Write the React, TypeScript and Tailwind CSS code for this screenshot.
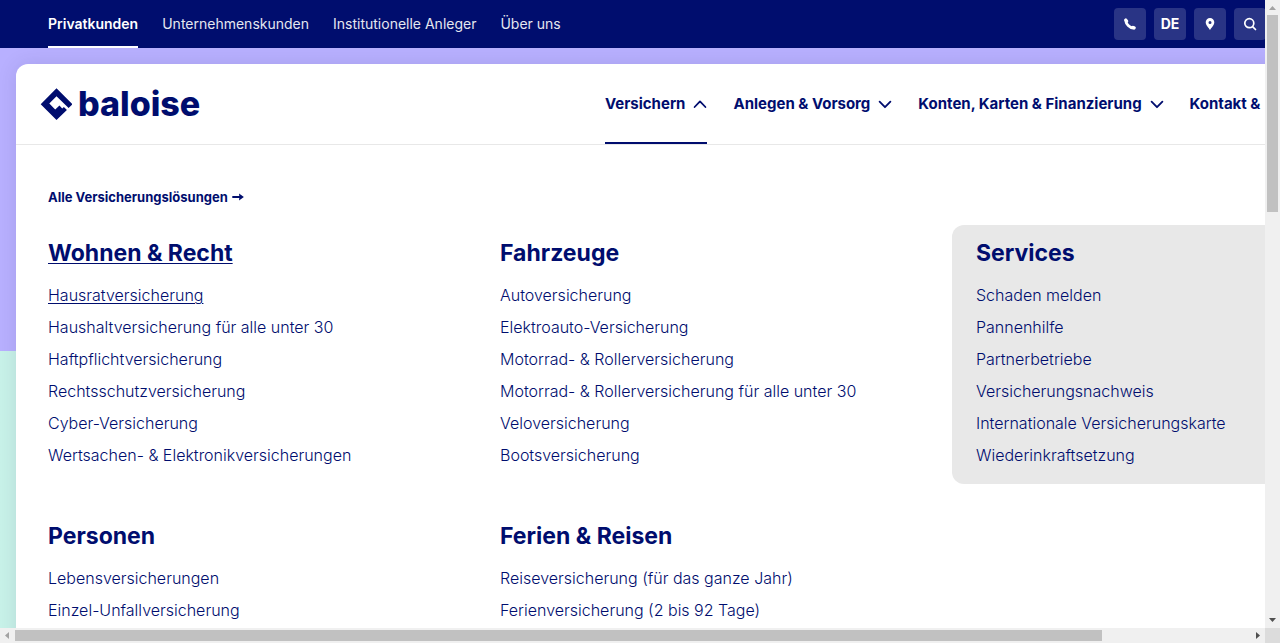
import React from "react";

type Group = { title: string; items: string[]; active?: boolean };

const portals = ["Privatkunden", "Unternehmenskunden", "Institutionelle Anleger", "Über uns"];

const mainNav = [
  { label: "Versichern", open: true },
  { label: "Anlegen & Vorsorg", open: false },
  { label: "Konten, Karten & Finanzierung", open: false },
];

const firstColumn: Group[] = [
  {
    title: "Wohnen & Recht",
    active: true,
    items: [
      "Hausratversicherung",
      "Haushaltversicherung für alle unter 30",
      "Haftpflichtversicherung",
      "Rechtsschutzversicherung",
      "Cyber-Versicherung",
      "Wertsachen- & Elektronikversicherungen",
    ],
  },
  { title: "Personen", items: ["Lebensversicherungen", "Einzel-Unfallversicherung"] },
];

const secondColumn: Group[] = [
  {
    title: "Fahrzeuge",
    items: [
      "Autoversicherung",
      "Elektroauto-Versicherung",
      "Motorrad- & Rollerversicherung",
      "Motorrad- & Rollerversicherung für alle unter 30",
      "Veloversicherung",
      "Bootsversicherung",
    ],
  },
  {
    title: "Ferien & Reisen",
    items: ["Reiseversicherung (für das ganze Jahr)", "Ferienversicherung (2 bis 92 Tage)"],
  },
];

const services: Group = {
  title: "Services",
  items: [
    "Schaden melden",
    "Pannenhilfe",
    "Partnerbetriebe",
    "Versicherungsnachweis",
    "Internationale Versicherungskarte",
    "Wiederinkraftsetzung",
  ],
};

function LinkGroup({ group }: { group: Group }) {
  return (
    <section>
      <h2 className="text-[23px] leading-8 font-bold">
        <a href="#" className={group.active ? "underline decoration-1 underline-offset-2" : ""}>
          {group.title}
        </a>
      </h2>
      <ul className="mt-2.5">
        {group.items.map((item, i) => (
          <li key={item} className="h-8 text-base leading-8 font-light whitespace-nowrap">
            <a href="#" className={group.active && i === 0 ? "underline decoration-1 underline-offset-2" : ""}>
              {item}
            </a>
          </li>
        ))}
      </ul>
    </section>
  );
}

function Chevron({ up }: { up: boolean }) {
  return (
    <svg viewBox="0 0 14 14" className="size-3.5" fill="none" stroke="currentColor" strokeWidth="1.8" strokeLinecap="round" strokeLinejoin="round" aria-hidden="true">
      <path d={up ? "M1.6 10 7 4.4 12.4 10" : "M1.6 4.6 7 10.2 12.4 4.6"} />
    </svg>
  );
}

function Logo() {
  return (
    <a href="#" aria-label="baloise" className="flex items-center gap-1.5">
      <svg viewBox="0 0 32 32" className="size-8" fill="currentColor" aria-hidden="true">
        <path d="M16.500.3 32.500 16.200l-3.900 3.900L16.500 8.200 9.300 15.600l5.900 6 4.300-4.100 2.700 2.900 1.700-1.300 3 3L16.500 32 .7 16.200Z" />
      </svg>
      <span className="text-[34px] leading-10 font-extrabold">baloise</span>
    </a>
  );
}

function ToolButton({ label, children }: { label: string; children: React.ReactNode }) {
  return (
    <button type="button" aria-label={label} className="flex size-8 items-center justify-center rounded bg-[#293485] text-sm font-bold text-white">
      {children}
    </button>
  );
}

function Header() {
  return (
    <header className="flex h-12 items-center justify-between bg-[#000d6e] pr-[174px] pl-12 text-sm text-[#e5e7f0]">
      <nav className="flex h-full gap-6">
        {portals.map((p, i) => (
          <a
            key={p}
            href="#"
            className={
              i === 0
                ? "flex items-center border-b-2 border-white pt-0.5 font-semibold text-white"
                : "flex items-center"
            }
          >
            {p}
          </a>
        ))}
      </nav>
      <div className="flex gap-2">
        <ToolButton label="Telefon">
          <svg viewBox="0 0 14 14" className="size-3.5" fill="none" stroke="currentColor" strokeLinecap="round" strokeLinejoin="round" aria-hidden="true">
            <path strokeWidth="3" d="M2.700 3.400c.5 3.700 3.800 7 7.800 7.700" />
            <path strokeWidth="3" d="m2.800 2.900 1 1.200M10 10.200l1.300.7" />
          </svg>
        </ToolButton>
        <ToolButton label="Sprache DE">DE</ToolButton>
        <ToolButton label="Standorte">
          <svg viewBox="0 0 14 14" className="size-3.5" fill="currentColor" fillRule="evenodd" aria-hidden="true">
            <path d="M7 1a4.300 4.300 0 0 1 4.300 4.300C11.300 8.300 8.100 11 7 13 5.900 11 2.700 8.300 2.700 5.300A4.300 4.300 0 0 1 7 1Zm0 2.900a1.500 1.500 0 1 0 0 3 1.500 1.500 0 0 0 0-3Z" />
          </svg>
        </ToolButton>
        <ToolButton label="Suche">
          <svg viewBox="0 0 14 14" className="size-3.5" fill="none" stroke="currentColor" strokeWidth="1.700" strokeLinecap="round" aria-hidden="true">
            <circle cx="6.300" cy="6.200" r="4.500" />
            <path d="m9.600 9.600 2.900 2.900" />
          </svg>
        </ToolButton>
      </div>
    </header>
  );
}

function MegaMenu() {
  return (
    <div className="mx-4 min-h-[1400px] rounded-t-xl bg-white shadow-[0_0_20px_rgba(20,20,60,0.1)]">
      <div className="flex h-[81px] items-center border-b border-[#e8e8e8] pl-6">
        <div className="w-[565px]">
          <Logo />
        </div>
        <nav className="flex h-full gap-[26px] text-[15px] font-bold whitespace-nowrap">
          {mainNav.map((n) => (
            <button
              key={n.label}
              type="button"
              aria-expanded={n.open}
              className={
                n.open
                  ? "flex items-center gap-2 border-b-2 border-[#000d6e] pt-0.5"
                  : "flex items-center gap-2 border-b-2 border-transparent pt-0.5"
              }
            >
              {n.label}
              <Chevron up={n.open} />
            </button>
          ))}
          <button type="button" className="flex items-center border-b-2 border-transparent pt-0.5">
            Kontakt &amp;
          </button>
        </nav>
      </div>
      <div className="px-8 pt-10">
        <a href="#" className="flex items-center gap-1 text-[13px] leading-6 font-bold">
          Alle Versicherungslösungen
          <svg viewBox="0 0 12 12" className="size-3" fill="currentColor" aria-hidden="true">
            <path d="M.3 5h7L7 2.500 11.900 6 7 9.500 7.300 7h-7Z" />
          </svg>
        </a>
        <div className="mt-4 grid grid-cols-3 items-start gap-3">
          <div className="flex flex-col gap-[49px] pt-3">
            {firstColumn.map((g) => (
              <LinkGroup key={g.title} group={g} />
            ))}
          </div>
          <div className="flex flex-col gap-[49px] pt-3">
            {secondColumn.map((g) => (
              <LinkGroup key={g.title} group={g} />
            ))}
          </div>
          <div className="rounded-xl bg-[#e8e8e8] px-6 pt-3 pb-[13px]">
            <LinkGroup group={services} />
          </div>
        </div>
      </div>
    </div>
  );
}

function Arrow({ d, className }: { d: string; className: string }) {
  return (
    <svg viewBox="0 0 15 15" className={className} fill="currentColor" aria-hidden="true">
      <path d={d} />
    </svg>
  );
}

export default function App() {
  return (
    <div className="grid h-screen grid-cols-[minmax(0,1fr)_15px] grid-rows-[minmax(0,1fr)_15px] font-['Inter',sans-serif] text-[#000d6e]">
      <div className="overflow-hidden bg-[#c8f2e9]">
        <div className="min-w-[1440px]">
          <Header />
          <div className="bg-linear-to-b from-[#b8b0ff] from-[303px] to-[#c8f2e9] to-[303px] pt-4">
            <MegaMenu />
          </div>
        </div>
      </div>
      <div className="flex flex-col bg-[#f0f0f0]" aria-hidden="true">
        <Arrow d="M7.500 6 11 10H4Z" className="size-[15px] text-[#a3a3a3]" />
        <div className="min-h-0 flex-1 px-0.5">
          <div className="h-[33%] bg-[#c1c1c1]" />
        </div>
        <Arrow d="M4 5h7L7.500 9Z" className="size-[15px] text-[#505050]" />
      </div>
      <div className="flex bg-[#f0f0f0]" aria-hidden="true">
        <Arrow d="M5 7.500 9 4v7Z" className="size-[15px] text-[#a3a3a3]" />
        <div className="min-w-0 flex-1 py-0.5">
          <div className="h-full w-[88%] bg-[#c1c1c1]" />
        </div>
        <Arrow d="M6 4v7l4-3.500Z" className="size-[15px] text-[#505050]" />
      </div>
      <div className="bg-[#dcdcdc]" />
    </div>
  );
}
